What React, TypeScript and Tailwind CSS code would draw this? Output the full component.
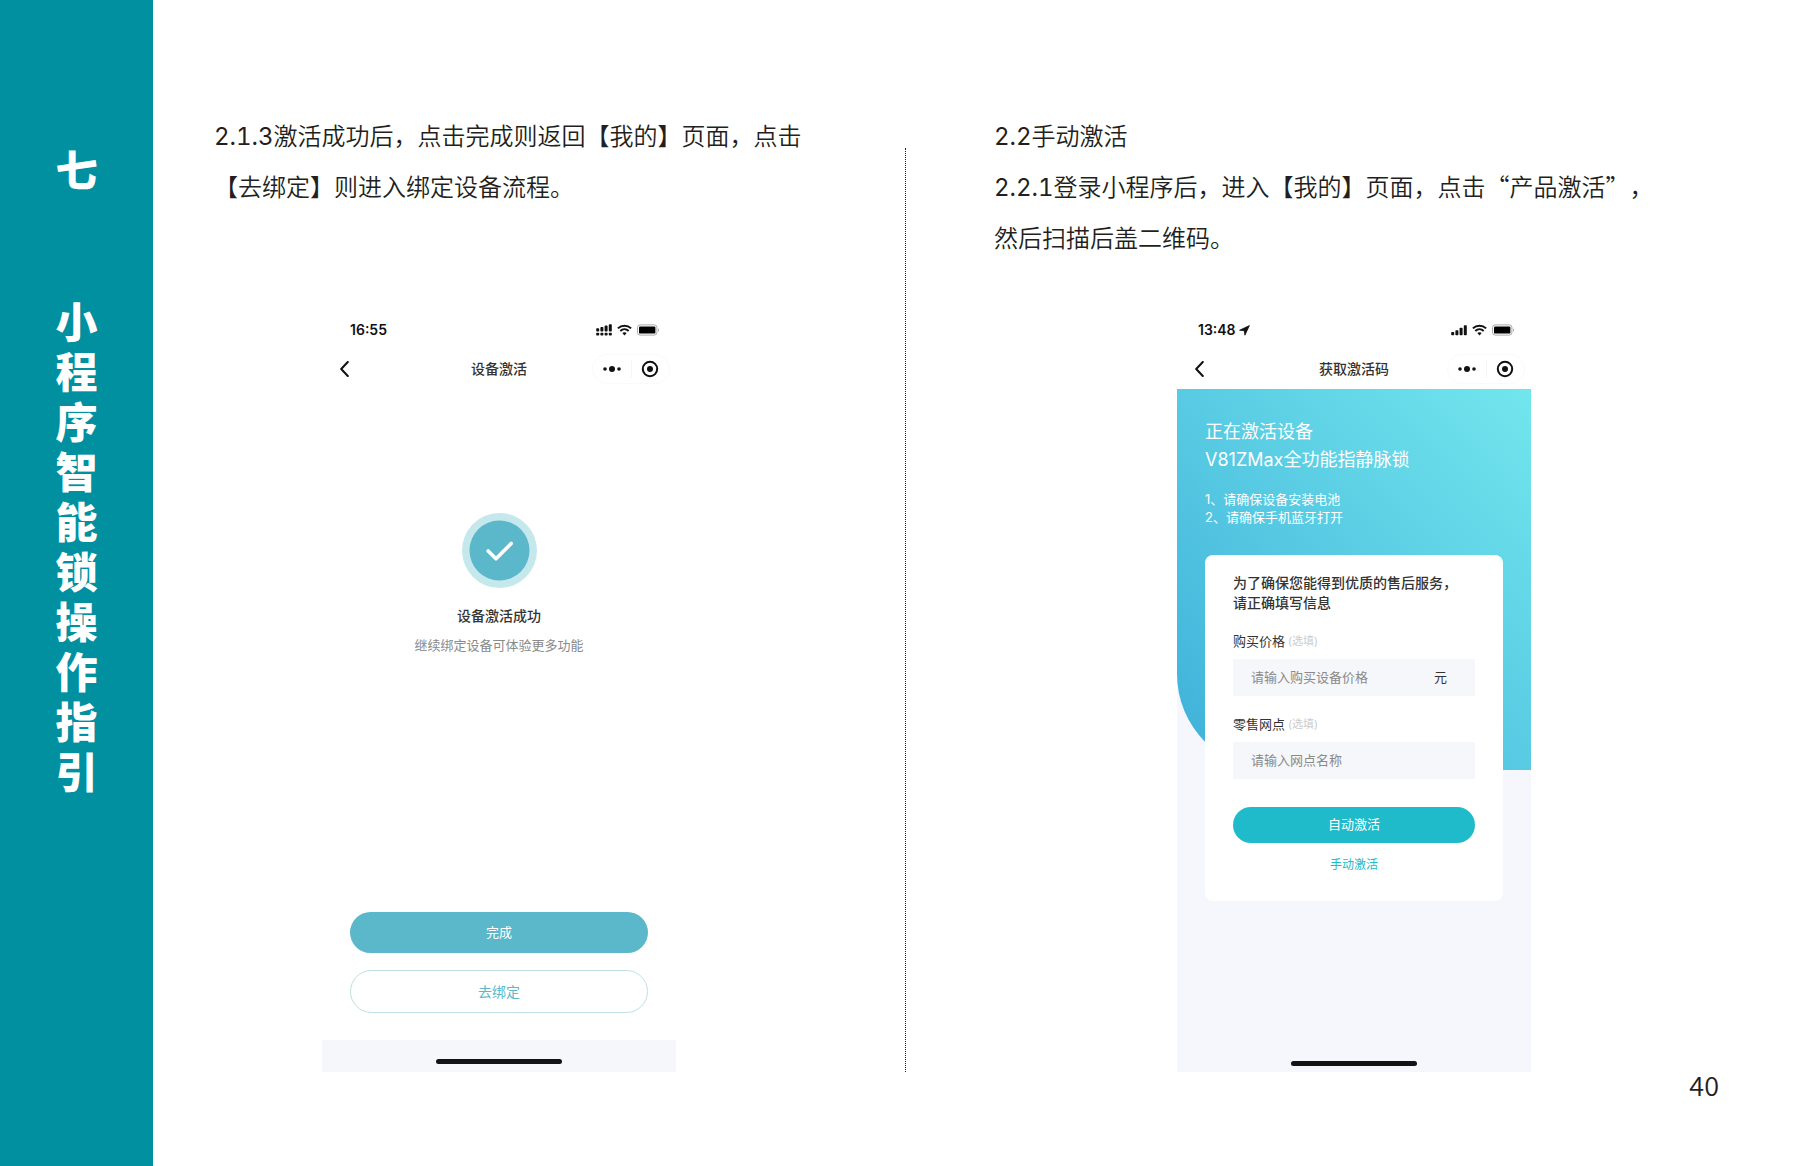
import { useState } from 'react'
import type { ReactNode } from 'react'

function SignalIcon({ dual }: { dual?: boolean }) {
  return (
    <svg width="16" height="12" viewBox="0 0 16 12" fill="#111" aria-hidden="true">
      {dual ? (
        <>
          <rect x="0.2" y="4.2" width="3" height="3.4" rx="0.8" />
          <rect x="4.4" y="3" width="3" height="4.6" rx="0.8" />
          <rect x="8.6" y="1.6" width="3" height="6" rx="0.8" />
          <rect x="12.8" y="0.2" width="3" height="7.4" rx="0.8" />
          {[0.2, 4.4, 8.6, 12.8].map(x => (
            <rect key={x} x={x} y="8.8" width="3" height="2.8" rx="0.8" />
          ))}
        </>
      ) : (
        <>
          <rect x="0.2" y="8" width="3" height="3.2" rx="0.8" />
          <rect x="4.4" y="6.2" width="3" height="5" rx="0.8" />
          <rect x="8.6" y="3.8" width="3" height="7.4" rx="0.8" />
          <rect x="12.8" y="1.2" width="3" height="10" rx="0.8" />
        </>
      )}
    </svg>
  )
}

function WifiIcon() {
  return (
    <svg width="15" height="12" viewBox="0 0 15 12" fill="none" stroke="#111" strokeWidth="2" aria-hidden="true">
      <path d="M0.9 4.4C4.6 0.8 10.4 0.8 14.1 4.4" />
      <path d="M3.3 7C5.7 4.8 9.3 4.8 11.7 7" />
      <path d="M7.5 11.4 5.3 9.1C6.6 8 8.4 8 9.7 9.1Z" fill="#111" stroke="none" />
    </svg>
  )
}

function BatteryIcon() {
  return (
    <svg width="23" height="12" viewBox="0 0 23 12" aria-hidden="true">
      <rect x="0.5" y="0.9" width="19.4" height="10.2" rx="2.6" fill="#fff" stroke="#aaa" />
      <rect x="2" y="2.4" width="16.4" height="7.2" rx="1.2" fill="#000" />
      <path d="M21 4.2C22.4 4.8 22.4 7.2 21 7.8Z" fill="#aaa" />
    </svg>
  )
}

function LocationArrow() {
  return (
    <svg width="11" height="11" viewBox="0 0 11 11" fill="#111" stroke="#111" strokeWidth="0.8" strokeLinejoin="round" aria-hidden="true">
      <path d="M10.4 0.6 5.9 10.2 5.3 5.7 0.6 5.2Z" />
    </svg>
  )
}

type PhoneProps = {
  time: string
  title: string
  located?: boolean
  dual?: boolean
  children: ReactNode
}

function Phone({ time, title, located, dual, children }: PhoneProps) {
  return (
    <section className="flex flex-col flex-1 w-[354px] text-[#333] font-['Inter','Noto_Sans_CJK_SC',sans-serif]">
      {/* Status bar */}
      <div className={`flex items-center justify-between h-9 pr-4 ${located ? 'pl-[21px]' : 'pl-7'}`}>
        <div className="flex items-center gap-[3px] text-[14px] leading-5 font-semibold text-[#111]">
          {time}
          {located && <LocationArrow />}
        </div>
        <div className="flex items-center gap-[5px]">
          <SignalIcon dual={dual} />
          <WifiIcon />
          <BatteryIcon />
        </div>
      </div>

      {/* Nav bar */}
      <div className="grid grid-cols-[1fr_auto_1fr] items-center h-[41px] px-[6px]">
        <button type="button" aria-label="返回" className="justify-self-start px-3">
          <svg width="9" height="16" viewBox="0 0 9 16" fill="none" stroke="#111" strokeWidth="2" strokeLinecap="round" strokeLinejoin="round">
            <path d="M7.8 1 1.2 8l6.6 7" />
          </svg>
        </button>
        <h2 className="text-[14px] leading-5 font-medium">{title}</h2>
        <div className="justify-self-end flex items-center w-[78px] h-[30px] rounded-full border border-[#fafafa]">
          <button type="button" aria-label="更多" className="flex-1 flex justify-center border-r border-[#f6f6f6] py-[5px]">
            <svg width="18" height="8" viewBox="0 0 18 8" fill="#111">
              <circle cx="2" cy="4" r="1.8" />
              <circle cx="9" cy="4" r="3" />
              <circle cx="16" cy="4" r="1.8" />
            </svg>
          </button>
          <button type="button" aria-label="关闭" className="flex-1 flex justify-center">
            <svg width="18" height="18" viewBox="0 0 18 18">
              <circle cx="9" cy="9" r="7.2" fill="none" stroke="#111" strokeWidth="2" />
              <circle cx="9" cy="9" r="3" fill="#111" />
            </svg>
          </button>
        </div>
      </div>

      {children}
    </section>
  )
}

function HomeBar() {
  return <div className="w-[126px] h-[5px] mx-auto rounded-full bg-[#111315]" />
}

type FieldProps = {
  id: string
  label: string
  placeholder: string
  unit?: string
}

function Field({ id, label, placeholder, unit }: FieldProps) {
  const [value, setValue] = useState('')

  return (
    <div className="mt-[18px]">
      <label htmlFor={id} className="flex items-center gap-[3px] h-5 text-[13px] leading-5">
        {label}
        <span className="text-[11px] text-[#ccc]">(选填)</span>
      </label>
      <div className="flex items-center h-[37px] mt-2 pl-[18px] pr-7 bg-[#f6f7fb] text-[13px]">
        <input
          id={id}
          value={value}
          onChange={e => setValue(e.target.value)}
          placeholder={placeholder}
          className="flex-1 min-w-0 bg-transparent outline-none placeholder:text-[#8a8a8a]"
        />
        {unit && <span>{unit}</span>}
      </div>
    </div>
  )
}

// Section numbers are set a little heavier than the light running text
function Num({ children }: { children: ReactNode }) {
  return <span className="font-normal tabular-nums">{children}</span>
}

export default function App() {
  return (
    <div className="flex min-h-screen bg-white text-[#231f20] font-['Noto_Sans_CJK_SC',sans-serif] [text-spacing-trim:space-all]">
      {/* Chapter strip */}
      <aside className="w-[153px] shrink-0 bg-[#00909f] pt-[143px] text-white">
        <h1 className="flex flex-col items-center gap-[102px] text-[42px] leading-[50px] font-black">
          <span>七</span>
          <span className="w-[42px] break-all">小程序智能锁操作指引</span>
        </h1>
      </aside>

      <main className="flex-1 min-w-0">
        <div className="grid grid-cols-[752fr_1px_897fr]">
          {/* Left page */}
          <div className="flex flex-col pt-[111px] pl-[61px]">
            <p className="min-h-[201px] text-[24px] leading-[51px] font-[350] font-['Inter','Noto_Sans_CJK_SC',sans-serif]">
              <Num>2.1.3</Num>激活成功后，点击完成则返回【我的】页面，点击
              <br />
              【去绑定】则进入绑定设备流程。
            </p>
            <div className="flex flex-col flex-1 pl-[108px]">
              <Phone time="16:55" title="设备激活" dual>
                <div className="flex flex-col items-center pt-[124px]">
                  <svg width="75" height="75" viewBox="0 0 75 75" aria-hidden="true">
                    <circle cx="37.5" cy="37.5" r="37.5" fill="#c4e8ec" />
                    <circle cx="37.5" cy="37.5" r="30" fill="#5bb8ca" />
                    <path d="M26.2 38 34 45.8 49.2 30.4" fill="none" stroke="#fff" strokeWidth="3.6" strokeLinecap="round" strokeLinejoin="round" />
                  </svg>
                  <h3 className="mt-[18px] text-[14px] leading-5 font-medium">设备激活成功</h3>
                  <p className="mt-[9px] text-[13px] leading-5 text-[#8a8a8a]">继续绑定设备可体验更多功能</p>
                </div>
                <div className="flex flex-col gap-[17px] mt-auto px-7 pb-[27px]">
                  <button type="button" className="h-[41px] rounded-full bg-[#5bb8ca] text-[13px] text-white">完成</button>
                  <button type="button" className="h-[43px] rounded-full border border-[#bfdfe2] text-[14px] text-[#5bb8ca]">去绑定</button>
                </div>
                <div className="h-8 pt-[19px] bg-[#f6f7fb]">
                  <HomeBar />
                </div>
              </Phone>
            </div>
          </div>

          <div className="mt-[148px] border-l border-dotted border-[#231f20]" />

          {/* Right page */}
          <div className="flex flex-col pt-[111px] pl-[88px]">
            <div className="min-h-[201px] text-[24px] leading-[51px] font-[350] font-['Inter','Noto_Sans_CJK_SC',sans-serif]">
              <h2><Num>2.2</Num>手动激活</h2>
              <p>
                <Num>2.2.1</Num>登录小程序后，进入【我的】页面，点击<span className="leading-none font-['Noto_Sans_CJK_SC',sans-serif]">“产品激活”</span>，
                <br />
                然后扫描后盖二维码。
              </p>
            </div>
            <div className="flex flex-col flex-1 pl-[183px]">
              <Phone time="13:48" title="获取激活码" located>
                <div className="relative flex-1 px-7 pt-[29px] pb-[6px] bg-[#f6f7fc]">
                  <div className="absolute inset-x-0 top-0 h-[381px] rounded-bl-[96px] bg-linear-to-tr from-[#3eb0d9] to-[#72e6ed]" />
                  <div className="relative">
                    <h3 className="text-[18px] leading-7 text-white">
                      正在激活设备
                      <br />
                      V81ZMax全功能指静脉锁
                    </h3>
                    <p className="mt-4 text-[13px] leading-[18px] text-white">
                      1、请确保设备安装电池
                      <br />
                      2、请确保手机蓝牙打开
                    </p>

                    <form className="mt-[29px] px-7 pt-[18px] pb-[26px] rounded-lg bg-white" onSubmit={e => e.preventDefault()}>
                      <p className="text-[14px] leading-5 font-medium">
                        为了确保您能得到优质的售后服务，
                        <br />
                        请正确填写信息
                      </p>
                      <Field id="price" label="购买价格" placeholder="请输入购买设备价格" unit="元" />
                      <Field id="store" label="零售网点" placeholder="请输入网点名称" />
                      <button type="submit" className="w-full h-9 mt-7 rounded-full bg-[#20bbcb] text-[13px] text-white">自动激活</button>
                      <a href="#manual" className="block mt-3 text-center text-[12px] leading-5 text-[#20bbcb]">手动激活</a>
                    </form>

                    <div className="pt-[160px]">
                      <HomeBar />
                    </div>
                  </div>
                </div>
              </Phone>
            </div>
          </div>
        </div>

        <footer className="pr-[84px] text-right text-[27px] leading-[26px] font-[350]">40</footer>
      </main>
    </div>
  )
}
